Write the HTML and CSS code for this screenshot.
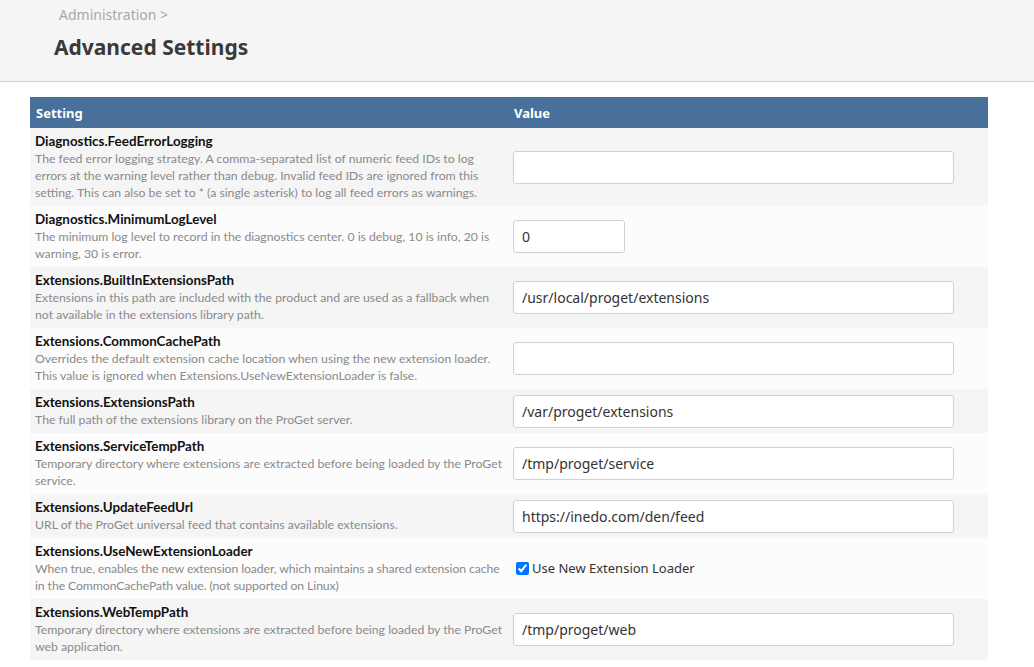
FILE: index.html
```html
<!DOCTYPE html>
<html>
<head>
<meta charset="utf-8">
<link rel="stylesheet" href="styles.css">
</head>
<body>
<header class="page-head">
  <div class="crumbs">Administration &gt;</div>
  <h1 class="title">Advanced Settings</h1>
</header>
<main class="content">
  <table class="settings">
    <colgroup><col class="c1"><col class="c2"></colgroup>
    <thead>
      <tr><th>Setting</th><th>Value</th></tr>
    </thead>
    <tbody>
      <tr>
        <td><div class="name">Diagnostics.FeedErrorLogging</div><div class="desc">The feed error logging strategy. A comma-separated list of numeric feed IDs to log errors at the warning level rather than debug. Invalid feed IDs are ignored from this setting. This can also be set to * (a single asterisk) to log all feed errors as warnings.</div></td>
        <td><input class="field" type="text" value=""></td>
      </tr>
      <tr>
        <td><div class="name">Diagnostics.MinimumLogLevel</div><div class="desc">The minimum log level to record in the diagnostics center. 0 is debug, 10 is info, 20 is warning, 30 is error.</div></td>
        <td><input class="field short" type="text" value="0"></td>
      </tr>
      <tr>
        <td><div class="name">Extensions.BuiltInExtensionsPath</div><div class="desc">Extensions in this path are included with the product and are used as a fallback when not available in the extensions library path.</div></td>
        <td><input class="field" type="text" value="/usr/local/proget/extensions"></td>
      </tr>
      <tr>
        <td><div class="name">Extensions.CommonCachePath</div><div class="desc">Overrides the default extension cache location when using the new extension loader. This value is ignored when Extensions.UseNewExtensionLoader is false.</div></td>
        <td><input class="field" type="text" value=""></td>
      </tr>
      <tr>
        <td><div class="name">Extensions.ExtensionsPath</div><div class="desc">The full path of the extensions library on the ProGet server.</div></td>
        <td><input class="field" type="text" value="/var/proget/extensions"></td>
      </tr>
      <tr>
        <td><div class="name">Extensions.ServiceTempPath</div><div class="desc">Temporary directory where extensions are extracted before being loaded by the ProGet service.</div></td>
        <td><input class="field" type="text" value="/tmp/proget/service"></td>
      </tr>
      <tr>
        <td><div class="name">Extensions.UpdateFeedUrl</div><div class="desc">URL of the ProGet universal feed that contains available extensions.</div></td>
        <td><input class="field" type="text" value="https://inedo.com/den/feed"></td>
      </tr>
      <tr>
        <td><div class="name">Extensions.UseNewExtensionLoader</div><div class="desc tight">When true, enables the new extension loader, which maintains a shared extension cache in the CommonCachePath value. (not supported on Linux)</div></td>
        <td><label class="check"><input type="checkbox" checked> Use New Extension Loader</label></td>
      </tr>
      <tr>
        <td><div class="name">Extensions.WebTempPath</div><div class="desc">Temporary directory where extensions are extracted before being loaded by the ProGet web application.</div></td>
        <td><input class="field" type="text" value="/tmp/proget/web"></td>
      </tr>
    </tbody>
  </table>
</main>
</body>
</html>
```

FILE: styles.css
```css
html, body {
  margin: 0;
  padding: 0;
  background: #fff;
  font-family: "Noto Sans", "Open Sans", sans-serif;
  color: #333;
}

.page-head {
  background: #f5f5f5;
  border-bottom: 1px solid #cfcfcf;
  height: 82px;
  box-sizing: border-box;
  padding: 5px 0 0 54px;
}

.crumbs {
  font-size: 14px;
  color: #a8a8a8;
  padding-left: 5px;
  line-height: 20px;
}

.title {
  margin: 9px 0 0 0;
  font-size: 21px;
  font-weight: 700;
  color: #3a3a3a;
  line-height: 26px;
}

.content {
  padding: 15px 46px 0 30px;
}

.settings {
  width: 958px;
  border-collapse: collapse;
  table-layout: fixed;
}

.settings col.c1 { width: 478px; }

.settings th {
  background: #48709b;
  color: #fff;
  text-align: left;
  font-size: 13px;
  font-weight: 700;
  height: 31px;
  padding: 0 6px;
}

.settings td {
  padding: 5px 0 5px 5px;
  vertical-align: middle;
}

.settings tbody tr:nth-child(odd) td { background: #f5f5f5; }
.settings tbody tr:nth-child(even) td { background: #fcfcfc; }

.name {
  font-family: "Lato", "Noto Sans", sans-serif;
  font-size: 13.4px;
  font-weight: 700;
  color: #111;
  line-height: 17px;
}

.desc {
  font-family: "Lato", "Noto Sans", sans-serif;
  font-size: 12.25px;
  color: #8a8a8a;
  line-height: 17px;
}

.desc.tight {
  letter-spacing: -0.1px;
}

.field {
  box-sizing: border-box;
  width: 441px;
  height: 33px;
  border: 1px solid #cfcfd6;
  border-radius: 3px;
  background: #fff;
  padding: 0 8px;
  font-family: inherit;
  font-size: 14px;
  color: #333;
  outline: none;
}

.field.short { width: 112px; }

.check {
  font-size: 13px;
  color: #333;
  display: inline-flex;
  align-items: center;
  gap: 3px;
  padding-left: 3px;
}

.check input {
  margin: 0;
  width: 13px;
  height: 13px;
}
```
